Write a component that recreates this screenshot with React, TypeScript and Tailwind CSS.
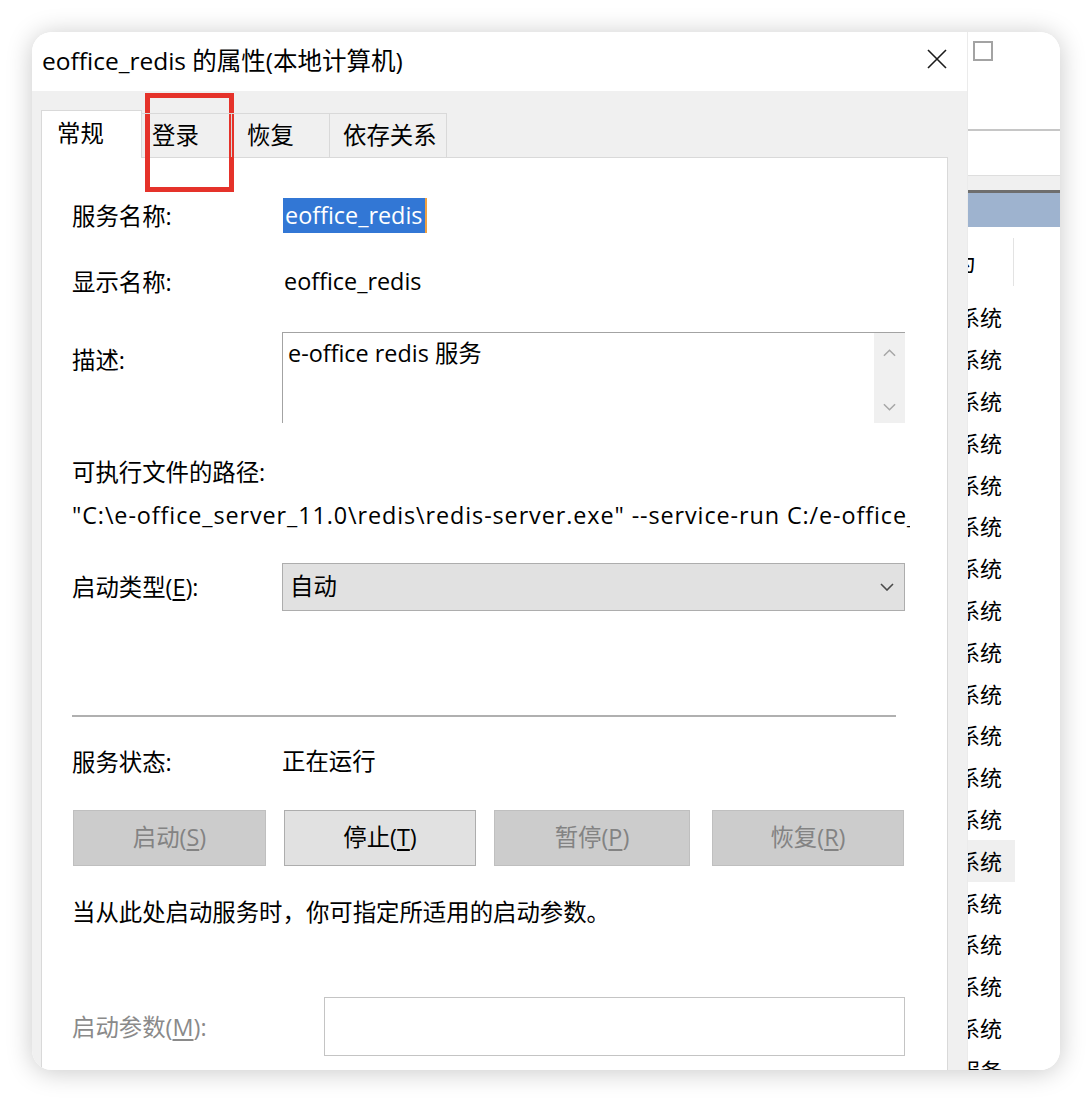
import type { ReactNode } from "react";

const rows = Array.from({ length: 18 }, () => "本地系统");

function Key({ k }: { k: string }) {
  return <span className="underline underline-offset-[3px]">{k}</span>;
}

function Label({ children, width = "w-[210px]", muted = false }: { children: ReactNode; width?: string; muted?: boolean }) {
  return (
    <div className={`${width} shrink-0 leading-[32px] ${muted ? "text-[#8a8a8a]" : "text-black"}`}>{children}</div>
  );
}

function Chevron({ up = false, className = "" }: { up?: boolean; className?: string }) {
  return (
    <svg width="14" height="8" viewBox="0 0 14 8" className={className} fill="none">
      <path d={up ? "M1 7L7 1L13 7" : "M1 1L7 7L13 1"} stroke="currentColor" strokeWidth="1.6" />
    </svg>
  );
}

function Btn({ children, disabled, width }: { children: ReactNode; disabled?: boolean; width: string }) {
  return (
    <div
      className={`${width} flex h-[56px] shrink-0 items-center justify-center border ${
        disabled ? "border-[#bfbfbf] bg-[#cccccc] text-[#838383]" : "border-[#adadad] bg-[#e1e1e1] text-black"
      }`}
    >
      {children}
    </div>
  );
}

function GeneralTab() {
  return (
    <div className="flex flex-col pl-[30px] pr-[42px]">
      <div className="mt-[40px] flex h-[35px] items-center">
        <Label>服务名称:</Label>
        <span className="ml-[1px] flex h-[35px] items-center border-r-2 border-[#f0a040] bg-[#3277d5] pl-[2px] pr-[3px] text-white">
          eoffice_redis
        </span>
      </div>

      <div className="mt-[31px] flex h-[35px] items-center">
        <Label>显示名称:</Label>
        <span className="pl-[2px]">eoffice_redis</span>
      </div>

      <div className="mt-[33px] flex h-[91px]">
        <div className="pt-[12px]">
          <Label>描述:</Label>
        </div>
        <div className="flex flex-1 border-l border-t border-[#a3a3a3]">
          <div className="flex-1 pl-[5px] pt-[4px] leading-[32px]">e-office redis 服务</div>
          <div className="flex w-[31px] flex-col items-center justify-between bg-[#f0f0f0] pb-[12px] pt-[16px] text-[#a6a6a6]">
            <Chevron up className="w-[13px]" />
            <Chevron className="w-[13px]" />
          </div>
        </div>
      </div>

      <div className="mt-[33px] leading-[32px]">可执行文件的路径:</div>
      <div className="mt-[11px] w-[838px] overflow-hidden whitespace-nowrap leading-[32px] tracking-[0.9px]">
        "C:\e-office_server_11.0\redis\redis-server.exe" --service-run C:/e-office_server
      </div>

      <div className="mt-[32px] flex h-[48px] items-center">
        <Label>
          启动类型(<Key k="E" />):
        </Label>
        <div className="flex h-[48px] flex-1 items-center justify-between border border-[#adadad] bg-[#e1e1e1] pl-[7px] pr-[10px]">
          <span>自动</span>
          <Chevron className="text-[#4a4a4a]" />
        </div>
      </div>

      <div className="mt-[104px] h-[2px] w-[824px] bg-[#b0b0b0]" />

      <div className="mt-[29px] flex h-[32px] items-center">
        <Label>服务状态:</Label>
        <span>正在运行</span>
      </div>

      <div className="mt-[32px] flex">
        <Btn disabled width="w-[193px] ml-[1px]">
          启动(<Key k="S" />)
        </Btn>
        <Btn width="w-[192px] ml-[18px]">
          停止(<Key k="T" />)
        </Btn>
        <Btn disabled width="w-[196px] ml-[18px]">
          暂停(<Key k="P" />)
        </Btn>
        <Btn disabled width="w-[192px] ml-[22px]">
          恢复(<Key k="R" />)
        </Btn>
      </div>

      <div className="mt-[30px] leading-[32px]">当从此处启动服务时，你可指定所适用的启动参数。</div>

      <div className="mt-[69px] flex h-[59px] items-center">
        <Label width="w-[252px]" muted>
          启动参数(<Key k="M" />):
        </Label>
        <div className="h-[59px] flex-1 border border-[#c4c4c4] bg-white" />
      </div>
    </div>
  );
}

function Dialog() {
  return (
    <div className="flex w-[935px] shrink-0 flex-col">
      <div className="flex h-[59px] shrink-0 items-center justify-between bg-white pl-[10px] pr-[20px]">
        <span className="text-[24.5px] leading-none">eoffice_redis 的属性(本地计算机)</span>
        <svg width="20" height="20" viewBox="0 0 20 20" className="mt-[-6px]">
          <path d="M1 1L19 19M19 1L1 19" stroke="#1b1b1b" strokeWidth="1.6" />
        </svg>
      </div>

      <div className="flex min-h-0 flex-1 flex-col bg-[#f0f0f0] pl-[9px] pr-[19px]">
        <div className="relative z-10 flex h-[66px] shrink-0 items-end">
          <div className="-mb-px h-[48px] w-[101px] border-l border-r border-t border-[#d9d9d9] bg-white pl-[15px] pt-[6px] leading-[32px]">
            常规
          </div>
          <div className="flex h-[44px] w-[90px] items-center border-r border-t border-[#d9d9d9] pl-[10px]">登录</div>
          <div className="flex h-[44px] w-[98px] items-center border-r border-t border-[#d9d9d9] pl-[15px]">恢复</div>
          <div className="flex h-[44px] w-[117px] items-center border-r border-t border-[#d9d9d9] pl-[13px]">依存关系</div>
        </div>
        <div className="h-[960px] shrink-0 border border-[#d9d9d9] bg-white">
          <GeneralTab />
        </div>
      </div>
    </div>
  );
}

function ServicesList() {
  return (
    <div className="flex min-w-0 flex-1 flex-col overflow-hidden border-l border-[#ebebeb] bg-white text-[22px]">
      <div className="h-[97px] shrink-0 pl-[5px] pt-[9px]">
        <div className="h-[20px] w-[20px] border-2 border-[#a3a3a3]" />
      </div>
      <div className="h-[2px] shrink-0 bg-[#c6c6c6]" />
      <div className="h-[44px] shrink-0" />
      <div className="h-[15px] shrink-0 border-t border-[#dedede] bg-[#f0f0f0]" />
      <div className="h-[3px] shrink-0 bg-[#6e6e6e]" />
      <div className="h-[34px] shrink-0 bg-[#9eb3cf]" />
      <div className="flex h-[70px] shrink-0 items-center">
        <span className="ml-[-58px] w-[103px] shrink-0 whitespace-nowrap">登录为</span>
        <div className="h-[48px] w-px bg-[#e3e3e3]" />
      </div>
      {rows.map((r, i) => (
        <div key={i} className={`flex h-[41.8px] shrink-0 items-center ${i === 13 ? "w-[47px] bg-[#efefef]" : ""}`}>
          <span className="ml-[-54px] whitespace-nowrap">{r}</span>
        </div>
      ))}
      <div className="flex h-[41.8px] shrink-0 items-center">
        <span className="ml-[-54px] whitespace-nowrap">网络服务</span>
      </div>
    </div>
  );
}

export default function App() {
  return (
    <div className="min-h-screen bg-white p-[32px] font-['Open_Sans','Noto_Sans_CJK_SC',sans-serif] text-[23.4px] text-black">
      <div className="relative flex h-[1038px] w-[1028px] overflow-hidden rounded-[20px] bg-white shadow-[0_2px_26px_rgba(0,0,0,0.22)]">
        <Dialog />
        <ServicesList />
        <div className="absolute left-[113px] top-[61px] h-[99px] w-[89px] border-[5px] border-[#e5322a]" />
      </div>
    </div>
  );
}
